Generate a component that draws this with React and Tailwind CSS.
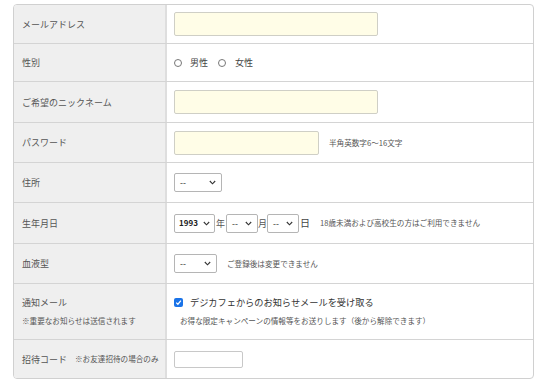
import React from "react";

const Chevron = () => (
  <svg width="7" height="5" viewBox="0 0 7 5" className="shrink-0">
    <path d="M0.8 1 L3.5 3.8 L6.2 1" fill="none" stroke="#333" strokeWidth="1.1" />
  </svg>
);

const Select = ({ value, width, bold }) => (
  <div
    className={`h-[19px] ${width} flex items-center justify-between border border-[#b5b5b5] rounded-[2px] bg-white ${bold ? "pl-[4px] pr-[4px] font-semibold text-[8px]" : "pl-[5px] pr-[5px] text-[8.5px]"} text-[#222]`}
  >
    <span>{value}</span>
    <Chevron />
  </div>
);

const Radio = () => (
  <span className="w-[8px] h-[8px] rounded-full border border-[#777] bg-white inline-block" />
);

const Row = ({ h, label, children, last }) => (
  <div
    className={`grid grid-cols-[153px_1fr] ${h} ${last ? "" : "border-b border-[#d4d4d4]"}`}
  >
    <div className="bg-[#efefef] border-r-2 border-[#dedede] pl-[8px] flex flex-col justify-center text-[9px] text-[#555]">
      {label}
    </div>
    <div className="pl-[7px] flex items-center">{children}</div>
  </div>
);

const Note = ({ children, className = "" }) => (
  <span className={`text-[7.6px] text-[#555] ${className}`}>{children}</span>
);

const TextInput = ({ width, yellow = true, height = "h-[24px]" }) => (
  <div
    className={`${width} ${height} rounded-[2px] border ${yellow ? "bg-[#fffde7] border-[#cfcfc6]" : "bg-white border-[#c8c8c8]"}`}
  />
);

export default function App() {
  return (
    <div
      className="w-[540px] h-[383px] bg-white pt-[4px] px-[13px] leading-none"
      style={{ fontFamily: '"Noto Sans CJK JP", "Noto Sans", sans-serif' }}
    >
      <div className="w-[521px] border border-[#d0d0d0] rounded-[4px] overflow-hidden">
        <Row h="h-[39px]" label="メールアドレス">
          <TextInput width="w-[204px]" />
        </Row>

        <Row h="h-[38px]" label="性別">
          <div className="flex items-center text-[9px] text-[#444]">
            <Radio />
            <span className="ml-[8px]">男性</span>
            <span className="ml-[10px] flex"><Radio /></span>
            <span className="ml-[9px]">女性</span>
          </div>
        </Row>

        <Row h="h-[41px]" label="ご希望のニックネーム">
          <TextInput width="w-[204px]" />
        </Row>

        <Row h="h-[40px]" label="パスワード">
          <TextInput width="w-[145px]" />
          <Note className="ml-[10px]">半角英数字6〜16文字</Note>
        </Row>

        <Row h="h-[40px]" label="住所">
          <Select value="--" width="w-[48px]" />
        </Row>

        <Row h="h-[41px]" label="生年月日">
          <div className="flex items-center">
            <Select value="1993" width="w-[41px]" bold />
            <span className="text-[9px] text-[#555] mx-[1px]">年</span>
            <Select value="--" width="w-[32px]" />
            <span className="text-[9px] text-[#555]">月</span>
            <Select value="--" width="w-[32px]" />
            <span className="text-[10px] text-[#444] ml-[1px]">日</span>
            <Note className="ml-[10px]">18歳未満および高校生の方はご利用できません</Note>
          </div>
        </Row>

        <Row h="h-[40px]" label="血液型">
          <Select value="--" width="w-[43px]" />
          <Note className="ml-[10px]">ご登録後は変更できません</Note>
        </Row>

        <Row
          h="h-[56px]"
          label={
            <>
              <span>通知メール</span>
              <span className="text-[7.6px] mt-[10px]">※重要なお知らせは送信されます</span>
            </>
          }
        >
          <div className="flex flex-col">
            <div className="flex items-center">
              <span className="w-[9px] h-[9px] rounded-[2px] bg-[#1a73e8] flex items-center justify-center">
                <svg width="7" height="7" viewBox="0 0 7 7">
                  <path d="M1.2 3.6 L2.9 5.2 L5.9 1.7" fill="none" stroke="#fff" strokeWidth="1.3" />
                </svg>
              </span>
              <span className="ml-[7px] text-[9.2px] text-[#333]">デジカフェからのお知らせメールを受け取る</span>
            </div>
            <Note className="ml-[6px] mt-[10px]">お得な限定キャンペーンの情報等をお送りします（後から解除できます）</Note>
          </div>
        </Row>

        <Row
          h="h-[38px]"
          last
          label={
            <div className="flex items-center">
              <span>招待コード</span>
              <span className="text-[7.6px] ml-[8px]">※お友達招待の場合のみ</span>
            </div>
          }
        >
          <TextInput width="w-[69px]" height="h-[17px]" yellow={false} />
        </Row>
      </div>
    </div>
  );
}
